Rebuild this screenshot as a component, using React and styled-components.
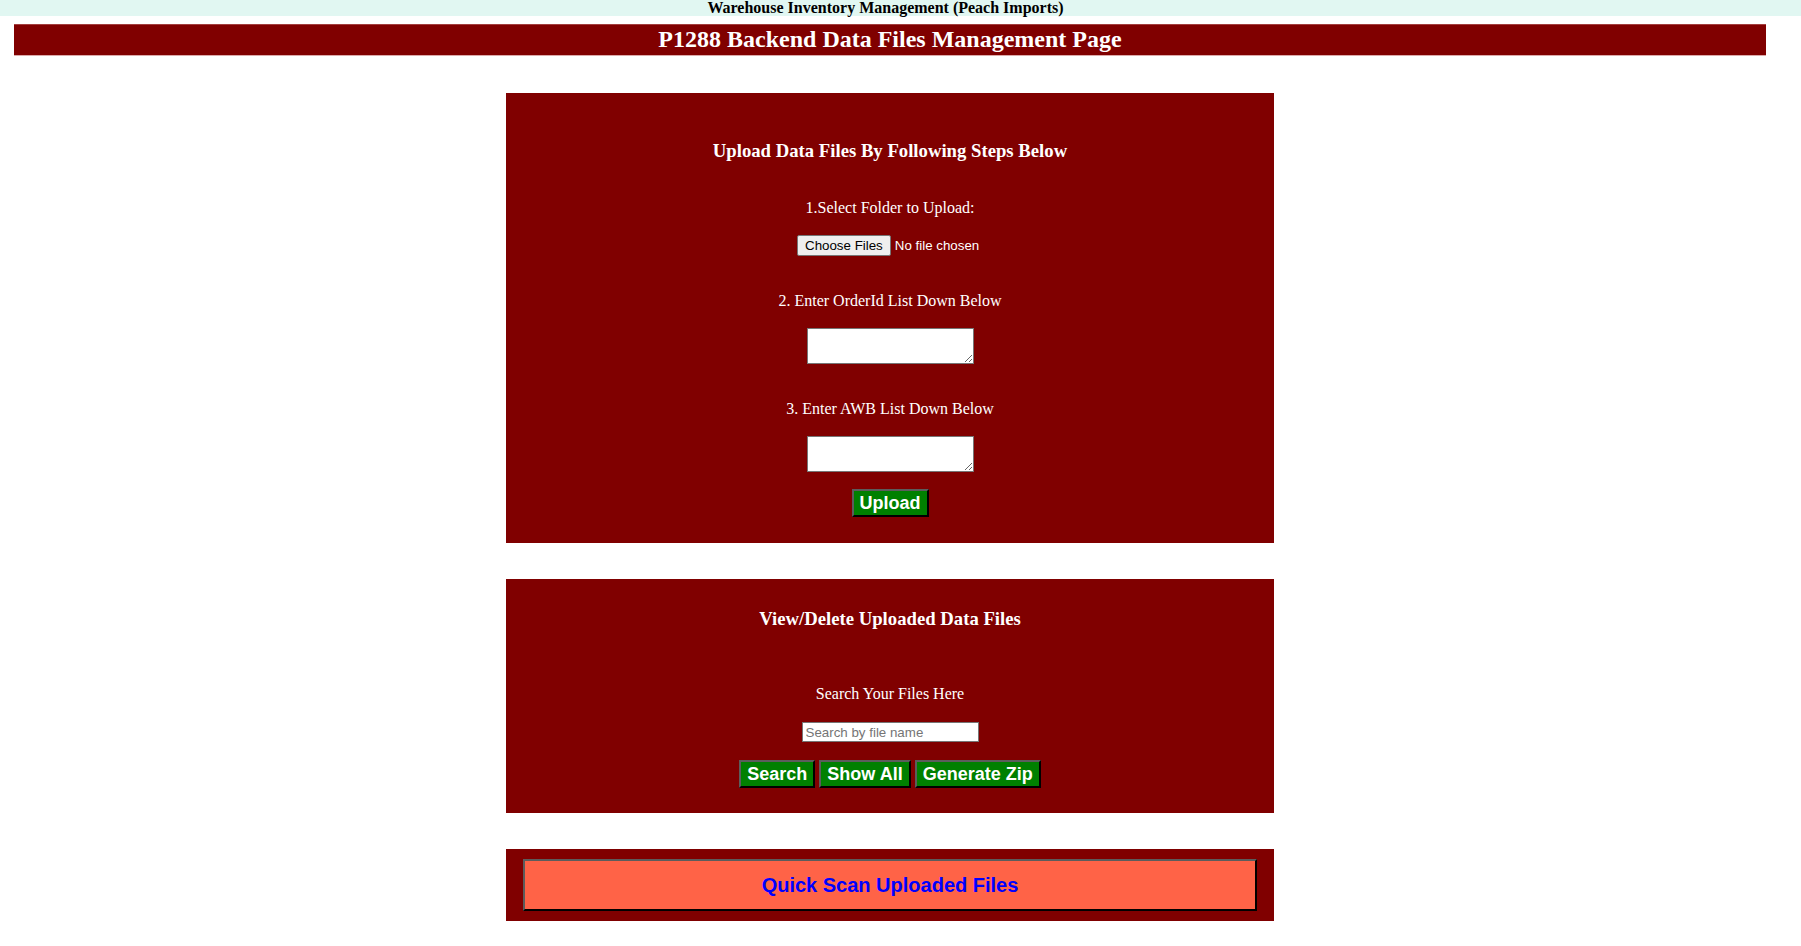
import styled, { createGlobalStyle } from 'styled-components'

const GlobalStyle = createGlobalStyle`
  html, body {
    margin: 0;
    padding: 0;
    background: #ffffff;
    font-family: "Liberation Serif", "Times New Roman", serif;
  }
`

const App = () => {
    const actions = ['Search', 'Show All', 'Generate Zip']

    return <S.Page>
        <GlobalStyle />
        <S.TopBar>Warehouse Inventory Management (Peach Imports)</S.TopBar>
        <S.Main>
            <S.Header>P1288 Backend Data Files Management Page</S.Header>

            <S.Card $mt={37} $pt={47} $pb={26}>
                <S.CardTitle>Upload Data Files By Following Steps Below</S.CardTitle>
                <S.StepLabel $mt={37}>1.Select Folder to Upload:</S.StepLabel>
                <S.FileInput type="file" multiple $mt={18} />
                <S.StepLabel $mt={36}>2. Enter OrderId List Down Below</S.StepLabel>
                <S.ListArea $mt={18} />
                <S.StepLabel $mt={36}>3. Enter AWB List Down Below</S.StepLabel>
                <S.ListArea $mt={18} />
                <S.ActionButton $mt={17}>Upload</S.ActionButton>
            </S.Card>

            <S.Card $mt={36} $pt={29} $pb={25}>
                <S.CardTitle>View/Delete Uploaded Data Files</S.CardTitle>
                <S.StepLabel $mt={55}>Search Your Files Here</S.StepLabel>
                <S.SearchInput type="text" placeholder="Search by file name" />
                <S.ButtonRow>
                    {actions.map((name) => <S.ActionButton key={name}>{name}</S.ActionButton>)}
                </S.ButtonRow>
            </S.Card>

            <S.Card $mt={36} $pt={10} $pb={10}>
                <S.ScanButton>Quick Scan Uploaded Files</S.ScanButton>
            </S.Card>
        </S.Main>
    </S.Page>
}
export default App


const Page = styled.div`
    min-height: 946px;
    background: #ffffff;
`

const TopBar = styled.div`
    height: 16px;
    line-height: 15px;
    background-color: #e1f7f2;
    color: #000000;
    font-weight: bold;
    font-size: 16px;
    text-align: center;
    padding-right: 30px;
    white-space: nowrap;
`

const Main = styled.main`
    width: 1780px;
    display: flex;
    flex-direction: column;
    align-items: center;
`

const Header = styled.h2`
    align-self: stretch;
    margin: 8px 14px 0;
    height: 30px;
    line-height: 28px;
    background-color: #800000;
    border-top: 1px solid #a33e3e;
    border-bottom: 1px solid #dcaaaa;
    color: #ffffff;
    font-size: 24px;
    font-weight: bold;
    text-align: center;
`

const Card = styled.section`
    width: 768px;
    box-sizing: border-box;
    margin-top: ${(p) => p.$mt}px;
    padding: ${(p) => p.$pt}px 0 ${(p) => p.$pb}px;
    background-color: #800000;
    display: flex;
    flex-direction: column;
    align-items: center;
    color: #ffffff;
`

const CardTitle = styled.h3`
    margin: 0;
    font-size: 18.72px;
    line-height: 22px;
    font-weight: bold;
`

const StepLabel = styled.p`
    margin: ${(p) => p.$mt}px 0 0;
    font-size: 16px;
    line-height: 18px;
`

const FileInput = styled.input`
    margin-top: ${(p) => p.$mt}px;
    width: 186px;
    height: 21px;
    color: #ffffff;
    font-family: "Liberation Sans", Arial, sans-serif;
    font-size: 13.33px;

    &::file-selector-button {
        font-family: "Liberation Sans", Arial, sans-serif;
        font-size: 13.33px;
        height: 21px;
        padding: 1px 7px;
        margin: 0 4px 0 0;
        background: #efefef;
        color: #000000;
        border: 1px solid #767676;
        border-radius: 2px;
    }
`

const ListArea = styled.textarea`
    margin-top: ${(p) => p.$mt}px;
    width: 167px;
    height: 36px;
    box-sizing: border-box;
    border: 1px solid #767676;
    background: #ffffff;
    padding: 2px;
`

const SearchInput = styled.input`
    margin-top: 19px;
    width: 177px;
    height: 20px;
    box-sizing: border-box;
    border: 1px solid #767676;
    padding: 1px 3px;
    font-family: "Liberation Sans", Arial, sans-serif;
    font-size: 13.33px;
    &::placeholder {
        color: #757575;
    }
`

const ButtonRow = styled.div`
    margin-top: 18px;
    display: flex;
    gap: 4px;
`

const ActionButton = styled.button`
    margin-top: ${(p) => p.$mt || 0}px;
    height: 28px;
    padding: 0 6px;
    background-color: #008000;
    color: #ffffff;
    font-family: "Liberation Sans", Arial, sans-serif;
    font-size: 18px;
    font-weight: bold;
    border-style: solid;
    border-width: 2px;
    border-color: #5c5c5c #000000 #000000 #5c5c5c;
    cursor: pointer;
`

const ScanButton = styled.button`
    width: 734px;
    height: 52px;
    background-color: #ff6347;
    color: #0000ff;
    font-family: "Liberation Sans", Arial, sans-serif;
    font-size: 20px;
    font-weight: bold;
    border-style: solid;
    border-width: 2px;
    border-color: #5c5c5c #000000 #000000 #5c5c5c;
    cursor: pointer;
`

const S = {
    Page,
    TopBar,
    Main,
    Header,
    Card,
    CardTitle,
    StepLabel,
    FileInput,
    ListArea,
    SearchInput,
    ButtonRow,
    ActionButton,
    ScanButton
}
